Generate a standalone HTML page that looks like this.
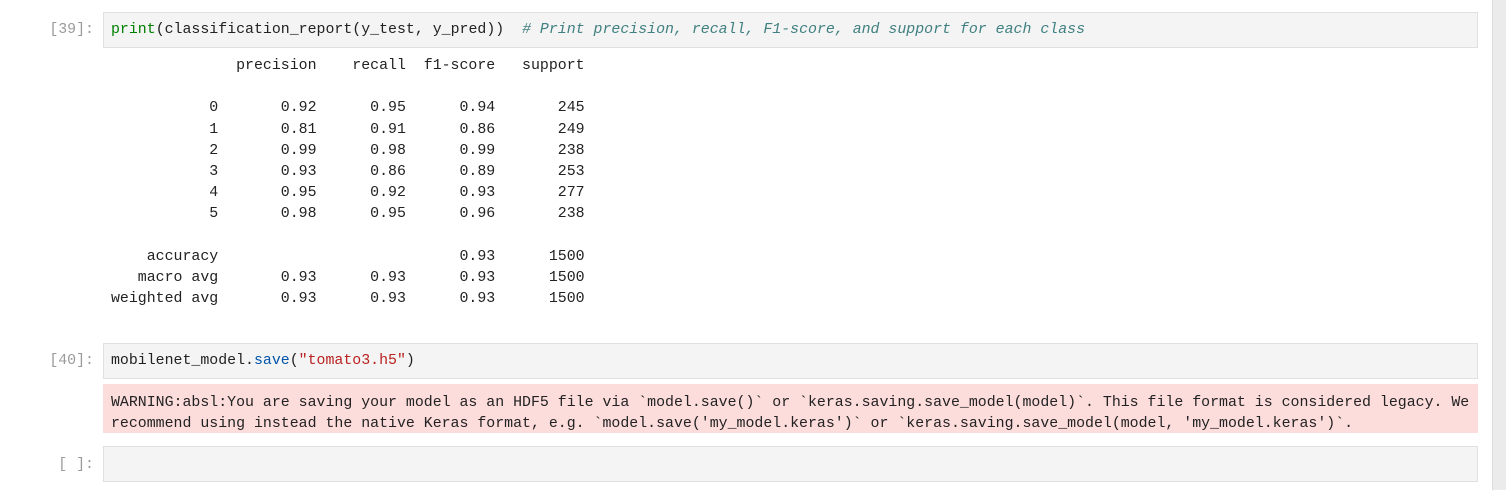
<!DOCTYPE html>
<html><head><style>
body{margin:0;width:1506px;height:496px;background:#fff;position:relative;overflow:hidden;font-family:"Liberation Mono",monospace;font-size:14.9px;}
.p{position:absolute;right:1412px;color:#9a9a9a;line-height:21px;white-space:pre}
.box{position:absolute;left:103px;width:1373px;background:#f4f4f4;border:1px solid #e0e0e0;}
.t{position:absolute;left:111px;white-space:pre;line-height:21.2px;color:#222}
.sb{position:absolute;left:1492px;top:0;width:14px;height:490px;background:#ebebeb;border-left:1px solid #dcdcdc}
.g{color:#008000}.c{color:#408080;font-style:italic}.b{color:#0055aa}.r{color:#ba2121}
</style></head><body>
<div class="box" style="top:12px;height:34px"></div>
<div class="p" style="top:20px">[39]:</div>
<div class="t" style="top:20px"><span class="g">print</span>(classification_report(y_test, y_pred))  <span class="c"># Print precision, recall, F1-score, and support for each class</span></div>
<div class="t" style="top:56px">              precision    recall  f1-score   support

           0       0.92      0.95      0.94       245
           1       0.81      0.91      0.86       249
           2       0.99      0.98      0.99       238
           3       0.93      0.86      0.89       253
           4       0.95      0.92      0.93       277
           5       0.98      0.95      0.96       238

    accuracy                           0.93      1500
   macro avg       0.93      0.93      0.93      1500
weighted avg       0.93      0.93      0.93      1500</div>
<div class="box" style="top:343px;height:34px"></div>
<div class="p" style="top:351px">[40]:</div>
<div class="t" style="top:351px">mobilenet_model.<span class="b">save</span>(<span class="r">"tomato3.h5"</span>)</div>
<div style="position:absolute;left:103px;top:384px;width:1375px;height:49px;background:#fddcdc"></div>
<div class="t" style="top:393px;line-height:21px">WARNING:absl:You are saving your model as an HDF5 file via `model.save()` or `keras.saving.save_model(model)`. This file format is considered legacy. We
recommend using instead the native Keras format, e.g. `model.save('my_model.keras')` or `keras.saving.save_model(model, 'my_model.keras')`.</div>
<div class="box" style="top:446px;height:34px"></div>
<div class="p" style="top:455px">[ ]:</div>
<div class="sb"></div>
</body></html>
